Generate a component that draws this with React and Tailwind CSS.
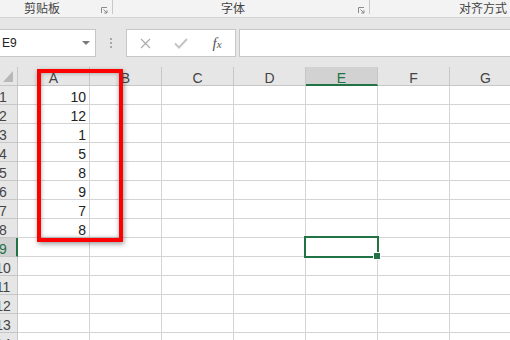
import React from "react";

const cols = ["A", "B", "C", "D", "E", "F", "G"];
const values = [10, 12, 1, 5, 8, 9, 7, 8];
const rows = Array.from({ length: 14 }, (_, i) => i + 1);

function Launcher() {
  return (
    <svg width="7" height="7" viewBox="0 0 7 7" className="self-end mb-[3px] mr-[4px] ml-auto">
      <path d="M0.5 6V0.5H6" fill="none" stroke="#8a8a8a" strokeWidth="1" />
      <path d="M2.5 2.5L6 6M6 3.2V6H3.2" fill="none" stroke="#8a8a8a" strokeWidth="1" />
    </svg>
  );
}

export default function App() {
  return (
    <div className="relative w-[510px] h-[340px] overflow-hidden bg-white font-['Liberation_Sans','Noto_Sans_CJK_SC',sans-serif]">
      {/* Ribbon group labels */}
      <div className="flex h-[18px] bg-[#f3f3f3] border-b border-[#d5d5d5] text-[12px] leading-[16px] text-[#444] font-['Noto_Sans_CJK_SC',sans-serif]">
        <div className="flex w-[112px]">
          <span className="ml-[24px]">剪贴板</span>
          <Launcher />
        </div>
        <div className="w-px h-[14px] bg-[#c8c8c8]" />
        <div className="flex w-[256px]">
          <span className="ml-[108px]">字体</span>
          <Launcher />
        </div>
        <div className="w-px h-[14px] bg-[#c8c8c8]" />
        <div className="flex flex-1">
          <span className="ml-[89px] whitespace-nowrap">对齐方式</span>
        </div>
      </div>

      {/* Name box + formula bar */}
      <div className="flex bg-[#e6e6e6] pt-[11px] pb-[10px]">
        <div className="flex items-center w-[96px] h-[28px] bg-white border border-l-0 border-[#c6c6c6]">
          <span className="pl-[2px] text-[12px] text-[#222]">E9</span>
          <svg width="8" height="4" viewBox="0 0 8 4" className="ml-auto mr-[5px]">
            <path d="M0 0H8L4 4Z" fill="#7a7a7a" />
          </svg>
        </div>
        <div className="flex w-[30px] items-center justify-center">
          <div className="flex flex-col gap-[2px]">
            <span className="w-[2px] h-[2px] bg-[#a8a8a8]" />
            <span className="w-[2px] h-[2px] bg-[#a8a8a8]" />
            <span className="w-[2px] h-[2px] bg-[#a8a8a8]" />
          </div>
        </div>
        <div className="grid grid-cols-3 w-[110px] h-[28px] bg-white border border-[#c6c6c6]">
          <div className="flex items-center justify-center">
            <svg width="11" height="11" viewBox="0 0 11 11">
              <path d="M1 1L10 10M10 1L1 10" stroke="#ababab" strokeWidth="1.2" fill="none" />
            </svg>
          </div>
          <div className="flex items-center justify-center">
            <svg width="14" height="11" viewBox="0 0 14 11">
              <path d="M1 5.5L5 9.5L13 1" stroke="#c4c4c4" strokeWidth="2" fill="none" />
            </svg>
          </div>
          <div className="flex items-center justify-center font-['Liberation_Serif',serif] italic text-[#555]">
            <span className="text-[15px] leading-none">f</span>
            <span className="text-[11px] leading-none mt-[3px]">x</span>
          </div>
        </div>
        <div className="flex-1 h-[28px] ml-[3px] bg-white border border-r-0 border-[#c6c6c6]" />
      </div>

      {/* Column headers */}
      <div className="flex text-[14px] leading-[14px] text-[#444]">
        <div className="relative w-[18px] h-[19px] bg-[#e6e6e6] border-r border-b border-[#c6c6c6] shrink-0">
          <svg width="11" height="12" viewBox="0 0 11 12" className="absolute left-[3px] top-[4px]">
            <path d="M10 0V11H0Z" fill="#b8b8b8" />
          </svg>
        </div>
        {cols.map((c) =>
          c === "E" ? (
            <div
              key={c}
              className="w-[72px] h-[19px] shrink-0 bg-[#d2d2d2] border-r border-[#c6c6c6] border-b-2 border-b-[#217346] text-center pt-[4px] text-[#217346]"
            >
              {c}
            </div>
          ) : (
            <div
              key={c}
              className="w-[72px] h-[19px] shrink-0 bg-[#e6e6e6] border-r border-b border-[#c6c6c6] text-center pt-[4px]"
            >
              {c}
            </div>
          )
        )}
      </div>

      {/* Rows */}
      {rows.map((r) => (
        <div key={r} className="flex text-[14px] leading-[14px] text-[#222]">
          {r === 9 ? (
            <div className="w-[18px] h-[19px] shrink-0 overflow-hidden bg-[#d2d2d2] border-b border-[#c6c6c6] border-r-2 border-r-[#217346] text-[#217346]">
              <div className="w-[28px] -ml-[11px] text-center pt-[4px]">{r}</div>
            </div>
          ) : (
            <div className="w-[18px] h-[19px] shrink-0 overflow-hidden bg-[#e6e6e6] border-r border-b border-[#c6c6c6] text-[#444]">
              <div className="w-[28px] -ml-[11px] text-center pt-[4px]">{r}</div>
            </div>
          )}
          {cols.map((c) => (
            <div
              key={c}
              className="w-[72px] h-[19px] shrink-0 border-r border-b border-[#d4d4d4] text-right pr-[3px] pt-[4px]"
            >
              {c === "A" && values[r - 1] !== undefined ? values[r - 1] : ""}
            </div>
          ))}
        </div>
      ))}

      {/* Red highlight drawn over column A */}
      <div className="absolute left-[37px] top-[69px] w-[86px] h-[173px] border-[4px] border-[#ff0000] shadow-[1px_2px_5px_rgba(0,0,0,0.4),inset_0_0_4px_rgba(0,0,0,0.35)]" />

      {/* Active cell E9 */}
      <div className="absolute left-[304px] top-[236px] w-[75px] h-[22px] border-2 border-[#217346]" />
      <div className="absolute left-[373px] top-[252px] w-[8px] h-[8px] bg-[#217346] border border-white" />
    </div>
  );
}
